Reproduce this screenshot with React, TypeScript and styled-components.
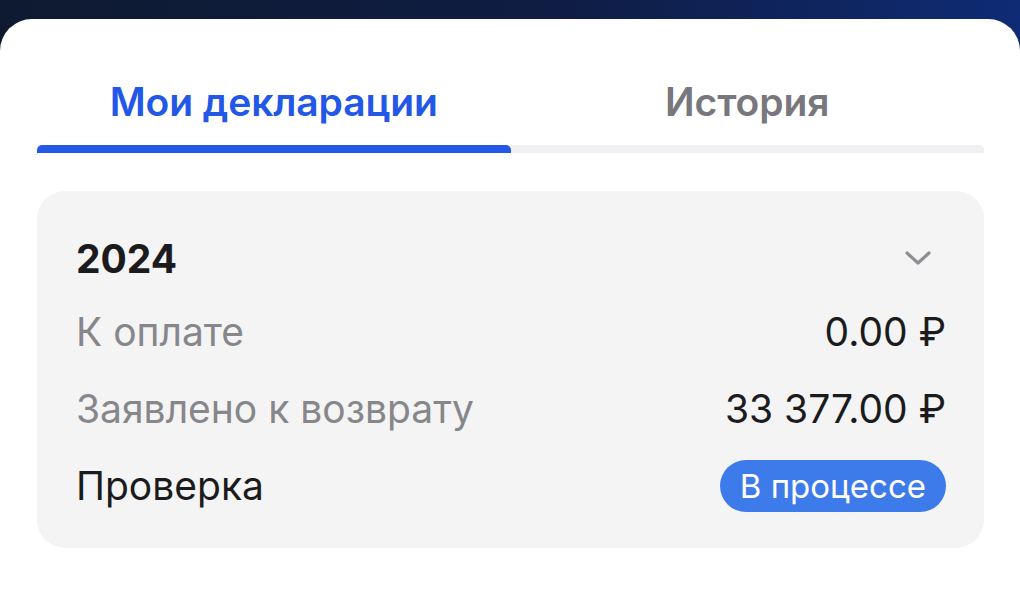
import styled, { createGlobalStyle } from 'styled-components';

const GlobalStyle = createGlobalStyle`
  html, body {
    margin: 0;
    padding: 0;
    background: #ffffff;
  }
  body {
    font-family: Inter, "Noto Sans", "Liberation Sans", sans-serif;
    -webkit-font-smoothing: antialiased;
  }
`;

/** 상단 그라데이션 배경 */
const Screen = styled.div`
  width: 1020px;
  height: 600px;
  overflow: hidden;
  background: linear-gradient(90deg, #0e1a30 0%, #0f1d44 55%, #0e2b74 100%);
  padding-top: 19px;
  box-sizing: border-box;
`;

/** 흰색 시트 */
const Sheet = styled.div`
  height: 100%;
  background: #ffffff;
  border-radius: 32px 32px 0 0;
  padding: 0 36px 0 37px;
  box-sizing: border-box;
`;

const Tabs = styled.div`
  display: grid;
  grid-template-columns: 1fr 1fr;
`;

const Tab = styled.div<{ $active?: boolean }>`
  display: flex;
  flex-direction: column;
  align-items: center;
  .label {
    height: 126px;
    box-sizing: border-box;
    padding-top: 38px;
    display: flex;
    align-items: center;
    font-size: 39px;
    font-weight: 600;
    letter-spacing: -0.1px;
    color: ${(p) => (p.$active ? '#2357e6' : '#77777d')};
  }
  .bar {
    align-self: stretch;
    height: 8px;
    border-radius: ${(p) => (p.$active ? '5px 5px 0 0' : '0 5px 0 0')};
    background: ${(p) => (p.$active ? '#2458e6' : '#f1f1f3')};
  }
`;

const Card = styled.div`
  margin-top: 38px;
  background: #f4f4f4;
  border-radius: 28px;
  padding: 32px 38px 24px 39px;
  display: flex;
  flex-direction: column;
`;

const Row = styled.div<{ $h?: number }>`
  display: flex;
  justify-content: space-between;
  align-items: center;
  height: ${(p) => p.$h ?? 77}px;
`;

const Year = styled.span`
  font-size: 39px;
  font-weight: 700;
  color: #1b1b1d;
`;

const Label = styled.span<{ $dark?: boolean }>`
  font-size: 39px;
  font-weight: 400;
  color: ${(p) => (p.$dark ? '#1b1b1d' : '#86868b')};
`;

const Value = styled.span`
  font-size: 39px;
  font-weight: 400;
  color: #1b1b1d;
`;

const Badge = styled.span`
  display: inline-flex;
  align-items: center;
  height: 52px;
  padding: 0 20px;
  border-radius: 26px;
  background: #3e7bea;
  color: #ffffff;
  font-size: 33px;
  font-weight: 400;
`;

const Chevron = styled.svg`
  width: 28px;
  height: 16px;
  margin-right: 14px;
`;

const rows = [
  { label: 'К оплате', value: '0.00 ₽' },
  { label: 'Заявлено к возврату', value: '33 377.00 ₽' },
];

export default function App() {
  return (
    <>
      <GlobalStyle />
      <Screen>
        <Sheet>
          <Tabs>
            <Tab $active>
              <div className="label">Мои декларации</div>
              <div className="bar" />
            </Tab>
            <Tab>
              <div className="label">История</div>
              <div className="bar" />
            </Tab>
          </Tabs>
          <Card>
            <Row $h={70}>
              <Year>2024</Year>
              <Chevron viewBox="0 0 28 16" fill="none">
                <path d="M3 3 L14 13 L25 3" stroke="#8e8e93" strokeWidth="3.2" strokeLinecap="round" strokeLinejoin="round" />
              </Chevron>
            </Row>
            {rows.map((r) => (
              <Row key={r.label}>
                <Label>{r.label}</Label>
                <Value>{r.value}</Value>
              </Row>
            ))}
            <Row>
              <Label $dark>Проверка</Label>
              <Badge>В процессе</Badge>
            </Row>
          </Card>
        </Sheet>
      </Screen>
    </>
  );
}
